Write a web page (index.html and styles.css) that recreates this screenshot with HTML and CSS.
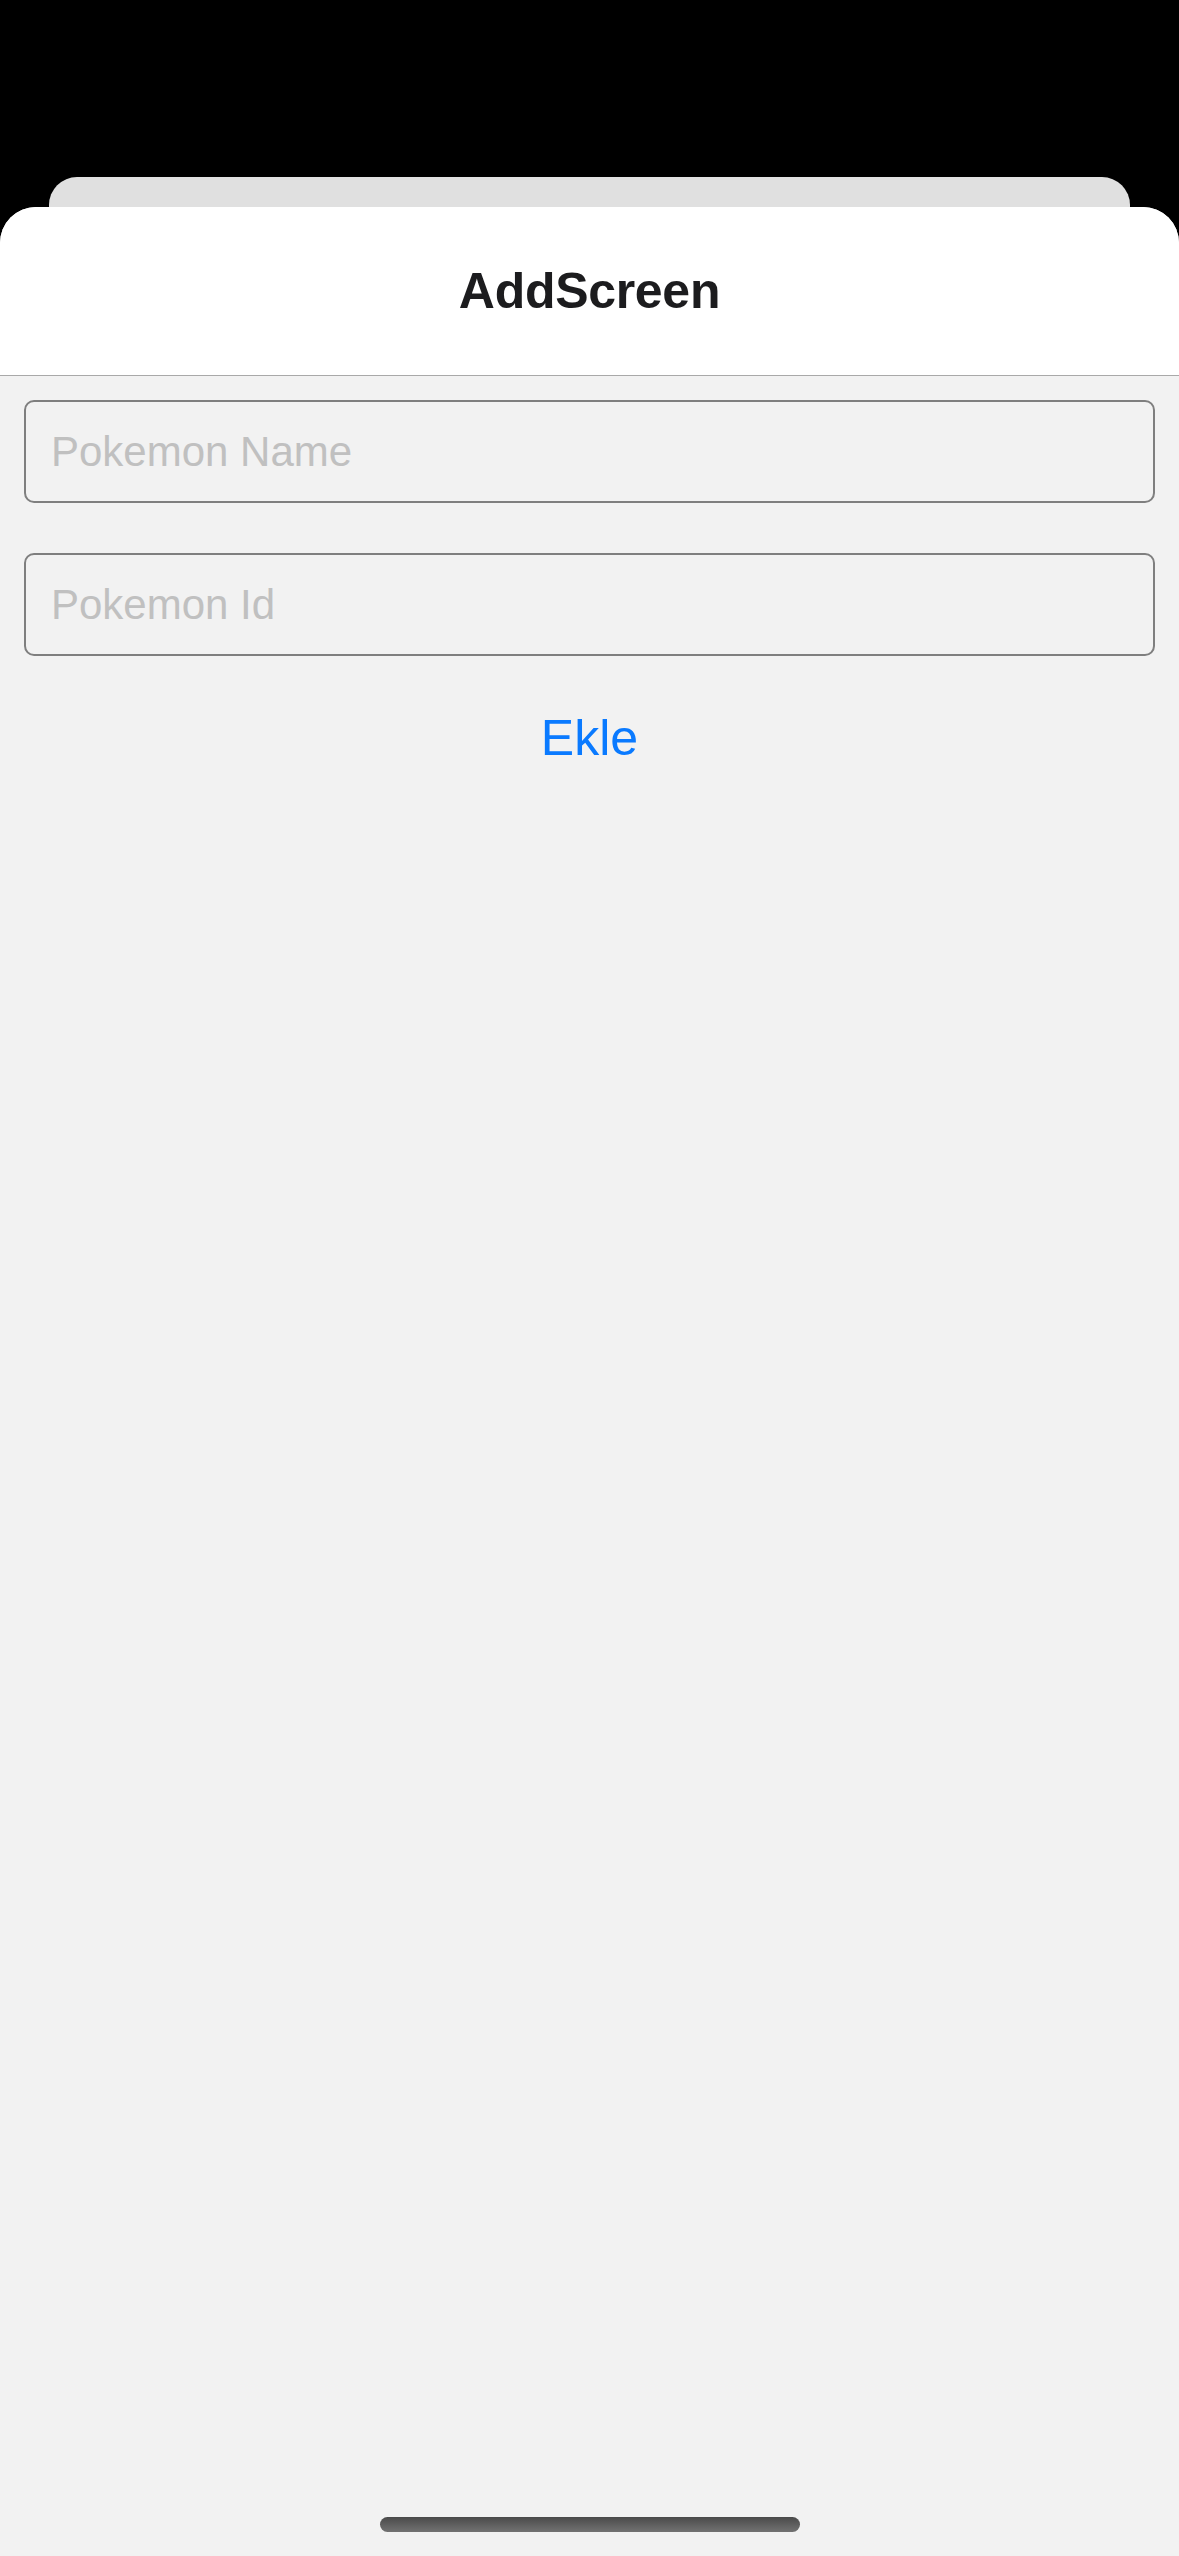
FILE: index.html
```html
<!DOCTYPE html>
<html lang="tr">
<head>
<meta charset="utf-8">
<title>AddScreen</title>
<link rel="stylesheet" href="styles.css">
</head>
<body>
<div class="screen">
  <div class="back-card"></div>
  <div class="sheet">
    <header class="nav">
      <h1 class="nav-title">AddScreen</h1>
    </header>
    <main class="form">
      <input class="field" type="text" placeholder="Pokemon Name">
      <input class="field field-second" type="text" placeholder="Pokemon Id">
      <button class="add-btn" type="button">Ekle</button>
    </main>
    <div class="home-indicator"></div>
  </div>
</div>
</body>
</html>
```

FILE: styles.css
```css
html, body {
  margin: 0;
  padding: 0;
  background: #000;
}

.screen {
  width: 1179px;
  height: 2556px;
  display: flex;
  flex-direction: column;
  padding-top: 177px;
  box-sizing: border-box;
  font-family: "Liberation Sans", Arial, sans-serif;
}

.back-card {
  height: 30px;
  margin: 0 49px;
  background: #e0e0e0;
  border-radius: 28px 28px 0 0;
  flex: none;
}

.sheet {
  flex: 1;
  display: flex;
  flex-direction: column;
  background: #f2f2f2;
  border-radius: 36px 36px 0 0;
  overflow: hidden;
}

.nav {
  height: 168px;
  background: #fff;
  border-bottom: 1px solid #a9a9a9;
  display: flex;
  align-items: center;
  justify-content: center;
  flex: none;
}

.nav-title {
  margin: 0;
  font-size: 50px;
  font-weight: 700;
  color: #1c1c1e;
  letter-spacing: -0.3px;
}

.form {
  display: flex;
  flex-direction: column;
  align-items: stretch;
  padding: 24px 24px 0;
}

.field {
  height: 103px;
  box-sizing: border-box;
  border: 2px solid #7f7f7f;
  border-radius: 10px;
  background: transparent;
  padding: 0 25px;
  font-family: "Liberation Sans", Arial, sans-serif;
  font-size: 42px;
  color: #1c1c1e;
  outline: none;
  margin: 0;
}

.field::placeholder {
  color: #c0c0c0;
}

.field-second {
  margin-top: 50px;
}

.add-btn {
  align-self: center;
  margin-top: 52px;
  padding: 0;
  border: none;
  background: none;
  font-family: "Liberation Sans", Arial, sans-serif;
  font-size: 50px;
  line-height: 60px;
  color: #0a7aff;
}

.home-indicator {
  margin: auto auto 24px;
  width: 420px;
  height: 15px;
  border-radius: 8px;
  background: linear-gradient(#4a4a4a, #727272);
  flex: none;
}
```
